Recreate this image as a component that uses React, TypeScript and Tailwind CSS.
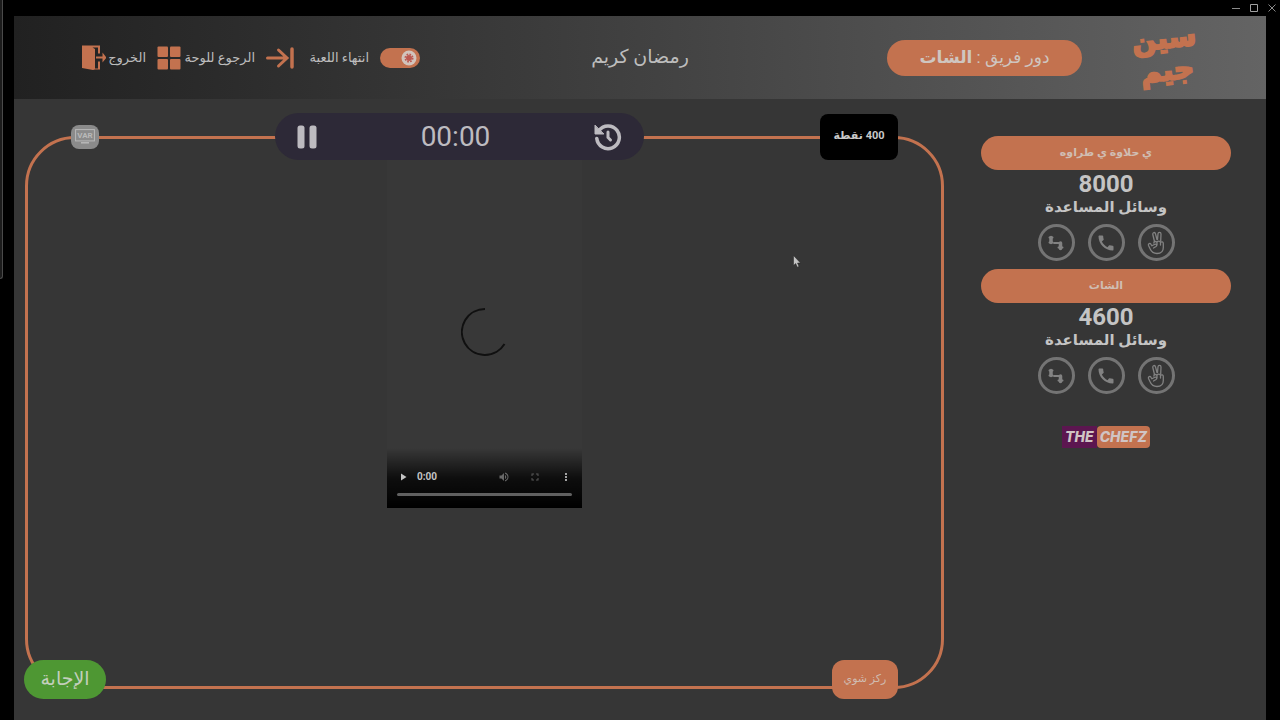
import { useState } from 'react';
import { MdCall, MdFullscreen, MdMoreVert, MdPlayArrow, MdVolumeUp } from 'react-icons/md';

type Team = {
  name: string;
  score: number;
};

const TEAMS: Team[] = [
  { name: 'ي حلاوة ي طراوه', score: 8000 },
  { name: 'الشات', score: 4600 },
];

function ExitIcon() {
  return (
    <svg viewBox="0 0 24 25" className="h-[25px] w-6 shrink-0" aria-hidden="true">
      <path d="M0 0.500h18v8h-2V2.500h-5.500L13 4v19.500h3v-7h2v8h-5L11 25 0 23z" fill="#c3724f" />
      <path d="M14 11.500h6.500v-4l4 5-4 5v-4H14z" fill="#c3724f" />
    </svg>
  );
}

function BoardIcon() {
  return (
    <svg viewBox="0 0 24 24" className="h-6 w-6 shrink-0" fill="#c3724f" aria-hidden="true">
      <rect x="0.500" y="0.500" width="10.500" height="10.500" rx="1" />
      <rect x="13" y="0.500" width="10.500" height="10.500" rx="1" />
      <rect x="0.500" y="13" width="10.500" height="10.500" rx="1" />
      <rect x="13" y="13" width="10.500" height="10.500" rx="1" />
    </svg>
  );
}

function EndIcon() {
  return (
    <svg viewBox="0 0 28 22" className="h-[22px] w-7 shrink-0" fill="none" stroke="#c3724f" strokeLinecap="round" aria-hidden="true">
      <path d="M1.500 11H20M12.500 3l8.500 8-8.500 8" strokeWidth="3" />
      <path d="M26 2v18" strokeWidth="3.500" />
    </svg>
  );
}

function RestartIcon() {
  return (
    <svg viewBox="0 0 28 28" className="h-7 w-7" fill="none" stroke="#bdbbc0" strokeLinecap="round" aria-hidden="true">
      <path d="M5 7.500A11.300 11.300 0 1 1 2.800 15.500" strokeWidth="3.500" />
      <path d="M1 2.500v8.500h8.500z" fill="#bdbbc0" strokeWidth="1" strokeLinejoin="round" />
      <path d="M14 9v5.500l2.500 2.500" strokeWidth="3" />
    </svg>
  );
}

function PitIcon() {
  return (
    <svg viewBox="0 0 16 16" className="h-4 w-4" fill="none" stroke="#828282" strokeLinecap="round" strokeLinejoin="round" aria-hidden="true">
      <path d="M3 2.500v5" strokeWidth="3.500" />
      <path d="M1.500 2.500h3M1.500 7.500h3" strokeWidth="2" />
      <path d="M6 8h5" strokeWidth="2" />
      <path d="M12.500 8v5.500" strokeWidth="3.500" />
      <path d="M10.500 12.500h4" strokeWidth="2" />
    </svg>
  );
}

function PeaceIcon() {
  return (
    <svg viewBox="0 0 18 24" className="h-6 w-[18px]" fill="none" stroke="#828282" strokeWidth="1.300" strokeLinecap="round" strokeLinejoin="round" aria-hidden="true">
      <path d="M7.500 10.500 5.800 3.500C5.400 1.300 8 .800 8.500 2.800L10 8.500" />
      <path d="M10.500 8.500 11 2.800c.2-2 3-2 3 .2l-.3 7" />
      <path d="M6.800 12c0-2 3.200-2 3.200 0v2M10 11.500c.3-1.800 3.500-1.800 3.500.2V14M13.500 11.500c1-1.200 2.800-.6 2.800 1v4c0 4-2.500 6-6.300 6-3.500 0-5.500-1.500-6.800-4.500L1.500 14.500c-.6-2 1.600-2.800 2.500-1.200l1 1.500 2.800-1.500c1.800-.7 2.600 1.300 1.200 2.200L6.500 17" />
    </svg>
  );
}

function VarIcon() {
  return (
    <svg viewBox="0 0 20 15" className="h-[15px] w-5" fill="none" stroke="#b9b9b9" aria-hidden="true">
      <rect x="0.600" y="0.600" width="18.800" height="11.300" />
      <path d="M6 13.800h8" strokeWidth="1.500" />
      <text x="10" y="9" textAnchor="middle" fontSize="8" fontWeight="700" fill="#b9b9b9" stroke="none">
        VAR
      </text>
    </svg>
  );
}

function PauseIcon() {
  return (
    <svg viewBox="0 0 20 24" className="h-6 w-5" fill="#bdbbc0" aria-hidden="true">
      <rect x="0.500" y="0.500" width="7" height="23" rx="2.500" />
      <rect x="12.500" y="0.500" width="7" height="23" rx="2.500" />
    </svg>
  );
}

function WindowBar() {
  return (
    <div className="flex h-4 shrink-0 items-center justify-end gap-[10px] pr-1" dir="ltr">
      <button type="button" aria-label="Minimize">
        <svg viewBox="0 0 8 8" className="h-2 w-2" stroke="#8b8b8b"><path d="M0 4.500h8" /></svg>
      </button>
      <button type="button" aria-label="Maximize">
        <svg viewBox="0 0 8 8" className="h-2 w-2" fill="none" stroke="#a0a0a0"><path d="M.5.5h7v7h-7z" /></svg>
      </button>
      <button type="button" aria-label="Close">
        <svg viewBox="0 0 8 8" className="h-2 w-2" stroke="#8b8b8b"><path d="M0.500.5l7 7M7.500.5l-7 7" /></svg>
      </button>
    </div>
  );
}

function Header() {
  const [live, setLive] = useState(true);

  return (
    <header className="grid h-[83px] shrink-0 grid-cols-[1fr_auto_1fr] items-center bg-linear-to-r from-[#212121] to-[#646464] px-[68px]">
      <div className="flex items-center gap-[52px]">
        <a
          href="#home"
          className="flex h-[70px] w-16 shrink-0 -rotate-6 items-start justify-center text-center text-[28px] leading-[32px] font-bold text-[#c3724f] [-webkit-text-stroke:2px_#c3724f]"
        >
          <span>سين<br />جيم</span>
        </a>
        <div className="flex h-9 w-[195px] items-center justify-center rounded-full bg-[#c3724f] text-[17px] whitespace-nowrap text-[#cfc6c0]">
          <span>دور فريق :&nbsp;<b>الشات</b></span>
        </div>
      </div>

      <h1 className="text-[19px] text-[#bdbdbd]">رمضان كريم</h1>

      <nav className="flex items-center justify-end gap-[11px] text-[13px] whitespace-nowrap text-[#bdbdbd]">
        <label className="relative flex">
          <input
            type="checkbox"
            role="switch"
            aria-label="الوضع"
            checked={live}
            onChange={(e) => setLive(e.target.checked)}
            className="h-5 w-10 appearance-none rounded-full bg-[#c3724f]"
          />
          <svg viewBox="0 0 16 16" className="pointer-events-none absolute top-[2px] right-[3px] h-4 w-4" aria-hidden="true">
            <circle cx="8" cy="8" r="7.500" fill="#d2c4bc" />
            <circle cx="8" cy="8" r="3.800" fill="none" stroke="#bd5850" strokeWidth="1.500" strokeDasharray="1.700 1.284" />
            <circle cx="8" cy="8" r="3" fill="#bd5850" />
          </svg>
        </label>
        <button type="button" className="flex w-[103px] items-center justify-between">
          انتهاء اللعبة <EndIcon />
        </button>
        <button type="button" className="flex w-[98px] items-center justify-between">
          الرجوع للوحة <BoardIcon />
        </button>
        <button type="button" className="flex w-16 items-center justify-between">
          الخروج <ExitIcon />
        </button>
      </nav>
    </header>
  );
}

function VideoPlayer() {
  return (
    <div className="flex h-[353px] w-[195px] flex-col bg-[#383838]" dir="ltr">
      <div className="flex flex-1 items-center justify-center pt-[60px]">
        <svg viewBox="0 0 48 48" className="h-12 w-12" fill="none" stroke="#101010" strokeWidth="2" aria-hidden="true">
          <path d="M24 1a23 23 0 1 0 19.500 35" />
        </svg>
      </div>
      <div className="flex h-[60px] flex-col justify-end bg-linear-to-b from-transparent via-black/75 via-50% to-black px-[10px] pb-3">
        <div className="flex items-center text-[#c4c4c4]">
          <button type="button" aria-label="تشغيل"><MdPlayArrow className="h-3 w-3" /></button>
          <span className="ml-2 flex-1 text-[10px] leading-4 font-bold">0:00</span>
          <div className="flex items-center gap-[19px]">
            <button type="button" aria-label="الصوت"><MdVolumeUp className="h-3 w-3 text-[#686868]" /></button>
            <button type="button" aria-label="ملء الشاشة"><MdFullscreen className="h-3 w-3 text-[#585858]" /></button>
            <button type="button" aria-label="المزيد"><MdMoreVert className="h-3 w-3" /></button>
          </div>
        </div>
        <input
          type="range"
          aria-label="موضع الفيديو"
          defaultValue={0}
          className="mt-2 block h-[3px] w-full appearance-none rounded-full bg-[#606060] [&::-webkit-slider-thumb]:h-0 [&::-webkit-slider-thumb]:w-0 [&::-webkit-slider-thumb]:appearance-none"
        />
      </div>
    </div>
  );
}

function QuestionBoard() {
  return (
    <section className="relative flex flex-1 flex-col items-center rounded-[50px] border-3 border-[#c3724f] pt-4">
      <VideoPlayer />

      {/* controls sitting on the top edge of the frame */}
      <div className="absolute inset-x-[43px] -top-[26px] flex items-center justify-between" dir="ltr">
        <button type="button" aria-label="VAR" className="flex h-6 w-7 items-center justify-center rounded-lg bg-[#8b8b8b]">
          <VarIcon />
        </button>
        <div className="flex h-[47px] w-[369px] items-center justify-between rounded-full bg-[#2d2937] px-[22px] text-[#bdbbc0]">
          <button type="button" aria-label="إيقاف مؤقت"><PauseIcon /></button>
          <time className="text-[28px]">00:00</time>
          <button type="button" aria-label="إعادة"><RestartIcon /></button>
        </div>
        <div className="flex h-[46px] w-[78px] items-center justify-center rounded-lg bg-black text-[11px] font-bold text-[#c9c9c9]" dir="rtl">
          400 نقطة
        </div>
      </div>

      {/* bottom edge */}
      <div className="absolute right-[43px] -bottom-[13px] -left-1 flex items-center justify-between" dir="ltr">
        <button type="button" className="h-[39px] w-[82px] rounded-full bg-[#4e9733] text-[19px] text-[#c3cfbd]">الإجابة</button>
        <div className="flex h-[39px] w-[66px] items-center justify-center rounded-xl bg-[#c3724f] text-[11px] text-[#d0bdb2]">
          ركز شوي
        </div>
      </div>
    </section>
  );
}

function TeamPanel({ team }: { team: Team }) {
  const helpButton = 'flex h-[37px] w-[37px] items-center justify-center rounded-full border-3 border-[#747474] text-[#828282]';

  return (
    <div className="flex flex-col items-center text-[#c4c4c4]">
      <h2 className="flex h-[34px] w-full items-center justify-center rounded-full bg-[#c3724f] text-[11px] font-bold text-[#d0bdb2]">
        {team.name}
      </h2>
      <p className="text-[24px] leading-[28px] font-bold">{team.score}</p>
      <p className="text-[15px] leading-[18px] font-bold">وسائل المساعدة</p>
      <div className="mt-2 flex gap-[13px]">
        <button type="button" aria-label="جاوب جوابين" className={helpButton}><PeaceIcon /></button>
        <button type="button" aria-label="اتصال بصديق" className={helpButton}><MdCall className="h-5 w-5" /></button>
        <button type="button" aria-label="الحفرة" className={helpButton}><PitIcon /></button>
      </div>
    </div>
  );
}

export default function App() {
  return (
    <div className="flex min-h-screen bg-black font-['Roboto','DejaVu_Sans',sans-serif]">
      <div className="w-[14px] shrink-0">
        <div className="h-[279px] w-[3px] rounded-br border-r border-b border-[#4a4a4a] bg-[#1c1c1c]" />
      </div>

      <div className="flex min-w-0 flex-1 flex-col">
        <WindowBar />
        <div className="mr-[14px] flex flex-1 flex-col bg-[#363636]" dir="rtl">
          <Header />
          <main className="flex flex-1 gap-[37px] pt-[37px] pr-[35px] pb-[31px] pl-[11px]">
            <aside className="flex w-[250px] shrink-0 flex-col gap-2">
              {TEAMS.map((team) => (
                <TeamPanel key={team.name} team={team} />
              ))}
              <a
                href="#sponsor"
                className="mt-6 flex h-[22px] self-center font-['Inter',sans-serif] text-[14px] leading-[22px] font-extrabold text-[#d0c4c4] italic"
                dir="ltr"
              >
                <span className="bg-[#5c1650] px-[3px]">THE</span>
                <span className="rounded-sm bg-[#c3724f] px-[3px]">CHEFZ</span>
              </a>
            </aside>
            <QuestionBoard />
          </main>
        </div>
      </div>

      {/* mouse pointer */}
      <svg viewBox="0 0 8 13" className="pointer-events-none absolute top-[255px] left-[793px] h-[13px] w-2" aria-hidden="true">
        <path d="M0.500.5v10l2.200-2 1.600 3.700 1.700-.8L4.500 8h3z" fill="#c4c4c4" stroke="#222" strokeWidth="0.500" />
      </svg>
    </div>
  );
}
